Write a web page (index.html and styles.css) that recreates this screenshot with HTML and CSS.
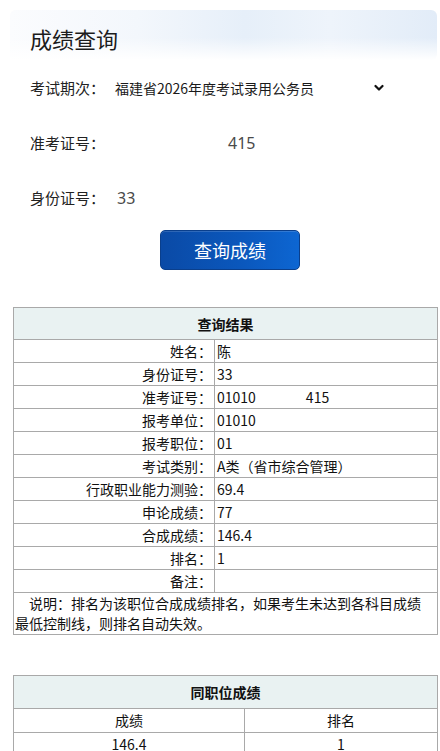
FILE: index.html
```html
<!DOCTYPE html>
<html lang="zh-CN">
<head>
<meta charset="utf-8">
<title>成绩查询</title>
<link rel="stylesheet" href="styles.css">
</head>
<body>
<div class="page">
  <div class="hero"><h1 class="title">成绩查询</h1></div>
  <div class="query">
    <div class="field">
      <span class="label">考试期次：</span>
      <div class="select">
        <span class="select-text">福建省2026年度考试录用公务员</span>
        <svg class="chev" width="10" height="8" viewBox="0 0 10 8"><polyline points="1.5,2 5,5.5 8.5,2" fill="none" stroke="#111" stroke-width="2.2" stroke-linecap="round" stroke-linejoin="round"/></svg>
      </div>
    </div>
    <div class="field">
      <span class="label">准考证号：</span>
      <span class="value value-far">415</span>
    </div>
    <div class="field">
      <span class="label">身份证号：</span>
      <span class="value">33</span>
    </div>
    <div class="actions"><button class="btn" type="button">查询成绩</button></div>
  </div>

  <table class="grid result">
    <tr><th colspan="2" class="head">查询结果</th></tr>
    <tr><td class="k">姓名：</td><td class="v">陈</td></tr>
    <tr><td class="k">身份证号：</td><td class="v">33</td></tr>
    <tr><td class="k">准考证号：</td><td class="v">01010<span class="gap">415</span></td></tr>
    <tr><td class="k">报考单位：</td><td class="v">01010</td></tr>
    <tr><td class="k">报考职位：</td><td class="v">01</td></tr>
    <tr><td class="k">考试类别：</td><td class="v">A类（省市综合管理）</td></tr>
    <tr><td class="k">行政职业能力测验：</td><td class="v">69.4</td></tr>
    <tr><td class="k">申论成绩：</td><td class="v">77</td></tr>
    <tr><td class="k">合成成绩：</td><td class="v">146.4</td></tr>
    <tr><td class="k">排名：</td><td class="v">1</td></tr>
    <tr><td class="k">备注：</td><td class="v"></td></tr>
    <tr><td colspan="2" class="note">说明：排名为该职位合成成绩排名，如果考生未达到各科目成绩<br>最低控制线，则排名自动失效。</td></tr>
  </table>

  <table class="grid peers">
    <tr><th colspan="2" class="head">同职位成绩</th></tr>
    <tr><td class="c c1">成绩</td><td class="c">排名</td></tr>
    <tr><td class="c c1">146.4</td><td class="c">1</td></tr>
  </table>
</div>
</body>
</html>
```

FILE: styles.css
```css
html, body {
  margin: 0;
  padding: 0;
  background: #ffffff;
}
body {
  font-family: "Noto Sans CJK SC", "Noto Sans", sans-serif;
  color: #1a1a1a;
}
.page {
  width: 440px;
  overflow: hidden;
}
.hero {
  margin: 10px 3px 0 10px;
  height: 50px;
  padding-left: 20px;
  box-sizing: border-box;
  background:
    linear-gradient(to bottom, rgba(255,255,255,0) 55%, #ffffff 100%),
    linear-gradient(90deg, #fbfcfe 0%, #f3f7fc 30%, #e6eff9 55%, #eef4fb 75%, #e2ecf8 100%);
  border-radius: 6px;
}
.title {
  margin: 0;
  padding-top: 16px;
  font-size: 22px;
  line-height: 24px;
  font-weight: 400;
  color: #1c1c1c;
}
.query {
  display: flex;
  flex-direction: column;
}
.field {
  height: 55px;
  display: flex;
  align-items: center;
  padding-left: 30px;
}
.label {
  width: 85px;
  font-size: 15px;
  color: #222;
}
.select {
  width: 270px;
  display: flex;
  align-items: center;
  justify-content: space-between;
}
.select-text {
  font-size: 14px;
  color: #1a1a1a;
}
.chev {
  margin-right: 1px;
}
.value {
  font-family: "Noto Sans", sans-serif;
  font-size: 16px;
  color: #4a4a4a;
  padding-left: 2px;
}
.value-far {
  padding-left: 113px;
}
.actions {
  margin-top: 5px;
  padding-left: 160px;
}
.btn {
  width: 140px;
  height: 40px;
  border: 1px solid #0a3f8c;
  border-radius: 5px;
  background: linear-gradient(90deg, #0a4aa6 0%, #0b58bd 60%, #0d66d2 100%);
  color: #ffffff;
  font-family: "Noto Sans CJK SC", sans-serif;
  font-size: 18px;
  padding: 0;
  box-shadow: inset 0 1px 0 rgba(255,255,255,0.15);
}
.grid {
  border-collapse: collapse;
  margin-left: 13px;
  width: 425px;
  font-size: 14px;
  color: #111;
}
.grid th, .grid td {
  border: 1px solid #a9a9a9;
  padding: 0;
}
.result {
  margin-top: 37px;
}
.head {
  height: 31px;
  background: #e9f2f2;
  font-weight: 700;
  font-size: 14px;
  text-align: center;
}
.k {
  width: 198px;
  height: 22px;
  line-height: 22px;
  text-align: right;
  padding-right: 2px !important;
}
.v {
  height: 22px;
  line-height: 22px;
  padding-left: 2px !important;
}
.gap {
  margin-left: 50px;
}
.note {
  line-height: 20px;
  padding: 0 0 1px 1px !important;
  text-indent: 14px;
}
.peers {
  margin-top: 40px;
}
.peers .head {
  height: 32px;
}
.c {
  height: 23px;
  line-height: 23px;
  text-align: center;
}
.c1 {
  width: 230px;
}
```
